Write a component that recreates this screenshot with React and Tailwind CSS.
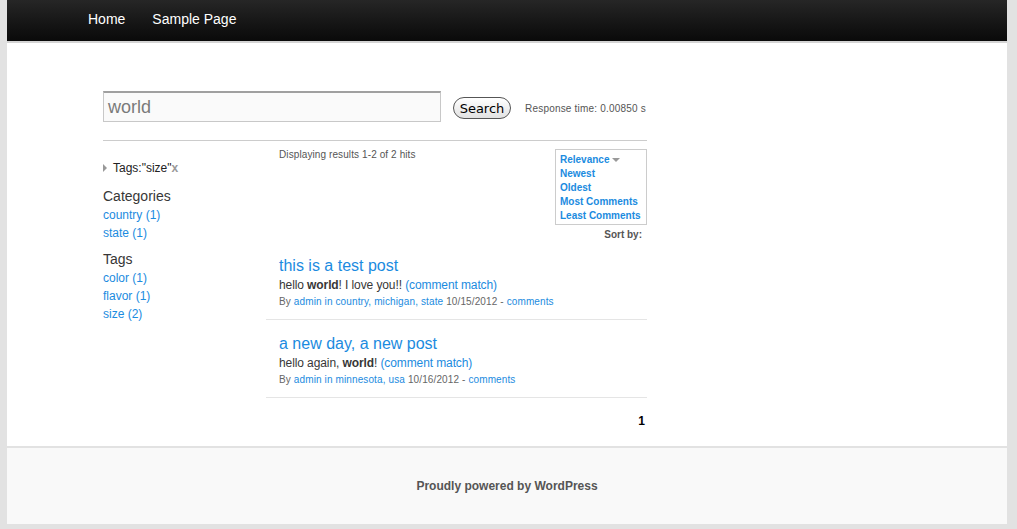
import React from "react";

const blue = "text-[#1b8be0]";

const Post = ({title, excerpt, meta}) => (
  <div className="pl-[13px] pt-[14px] pb-[9px] border-b border-[#e5e5e5]">
    <h2 className={`text-[16px] leading-[20px] ${blue}`}>{title}</h2>
    <p className="text-[12px] leading-[18px] text-[#373737] tracking-[-0.1px]">{excerpt}</p>
    <p className="text-[10px] leading-[15px] pb-[1px] text-[#666] tracking-[0.12px]">{meta}</p>
  </div>
);

const SideList = ({title, items}) => (
  <div className="mt-[7px]">
    <h3 className="text-[14px] leading-[20px] text-[#373737]">{title}</h3>
    {items.map(item => (
      <div key={item} className={`text-[12px] leading-[18px] ${blue}`}>
        {item}
      </div>
    ))}
  </div>
);

export default function App() {
  return (
    <div
      className="h-[529px] bg-[#e2e2e2] pl-[7px] pr-[10px] pb-[5px]"
      style={{fontFamily: '"Liberation Sans", Arial, sans-serif'}}
    >
      <div className="h-full w-[1000px] bg-white flex flex-col">
        {/* header */}
        <div className="h-[43px] shrink-0 border-b-2 border-[#d4d4d4] bg-gradient-to-b from-[#262626] to-[#0a0a0a] flex items-center pl-[81px] pb-[2px] gap-[27px]">
          <span className="text-white text-[14px]">Home</span>
          <span className="text-white text-[14px]">Sample Page</span>
        </div>

        {/* main */}
        <div className="flex-1 pl-[96px] pt-[48px]">
          <div className="w-[544px]">
            <div className="flex items-center">
              <div className="w-[338px] h-[31px] shrink-0 border border-[#c8c8c8] border-t-2 border-t-[#a0a0a0] bg-[#fafafa] flex items-center pl-[4px]">
                <span className="text-[18px] text-[#7a7a7a]">world</span>
              </div>
              <button
                className="ml-[12px] mt-[3px] w-[58px] h-[22px] shrink-0 rounded-full border border-[#555] bg-gradient-to-b from-white to-[#e2e2e2] text-[13px] text-black leading-none"
                style={{fontFamily: '"DejaVu Sans", sans-serif'}}
              >
                Search
              </button>
              <span className="ml-[14px] mt-[3px] whitespace-nowrap text-[10px] text-[#555] tracking-[0.2px]">
                Response time: 0.00850 s
              </span>
            </div>

            <div className="mt-[18px] border-t border-[#ccc]" />

            <div className="flex">
              {/* sidebar */}
              <div className="w-[163px] pt-[19px]">
                <div className="flex items-center text-[12px] leading-[16px] text-[#222]">
                  <span className="w-0 h-0 border-y-[4px] border-y-transparent border-l-[4px] border-l-[#999] mr-[6px]" />
                  <span>Tags:"size"</span>
                  <span className="font-bold text-[#999]">x</span>
                </div>
                <div className="pt-[3px]">
                  <SideList title="Categories" items={["country (1)", "state (1)"]} />
                  <SideList title="Tags" items={["color (1)", "flavor (1)", "size (2)"]} />
                </div>
              </div>

              {/* results */}
              <div className="w-[381px]">
                <div className="flex justify-between pt-[8px]">
                  <span className="pl-[13px] text-[10px] leading-[12px] text-[#555] tracking-[0.1px]">
                    Displaying results 1-2 of 2 hits
                  </span>
                  <div className="flex flex-col items-end">
                    <div className="w-[92px] border border-[#ccc] px-[4px] pt-[3px] pb-[1px]">
                      {["Relevance", "Newest", "Oldest", "Most Comments", "Least Comments"].map((s, i) => (
                        <div key={s} className={`flex items-center text-[10px] leading-[14px] font-bold ${blue}`}>
                          {s}
                          {i === 0 && (
                            <span className="ml-[3px] w-0 h-0 border-x-[4px] border-x-transparent border-t-[4px] border-t-[#999]" />
                          )}
                        </div>
                      ))}
                    </div>
                    <span className="mt-[3px] mr-[5px] text-[10px] leading-[14px] font-bold text-[#555]">Sort by:</span>
                  </div>
                </div>

                <Post
                  title="this is a test post"
                  excerpt={
                    <>
                      hello <b>world</b>! I love you!! <span className={blue}>(comment match)</span>
                    </>
                  }
                  meta={
                    <>
                      By <span className={blue}>admin</span> <span className={blue}>in country, michigan, state</span> 10/15/2012 - <span className={blue}>comments</span>
                    </>
                  }
                />
                <Post
                  title="a new day, a new post"
                  excerpt={
                    <>
                      hello again, <b>world</b>! <span className={blue}>(comment match)</span>
                    </>
                  }
                  meta={
                    <>
                      By <span className={blue}>admin</span> <span className={blue}>in minnesota, usa</span> 10/16/2012 - <span className={blue}>comments</span>
                    </>
                  }
                />
                <div className="flex justify-end pr-[2px] pt-[14px]">
                  <span className="text-[12px] font-bold text-black">1</span>
                </div>
              </div>
            </div>
          </div>
        </div>

        {/* footer */}
        <div className="h-[78px] shrink-0 border-t-2 border-[#e2e2e2] bg-[#f9f9f9] flex items-center justify-center">
          <span className="text-[12px] font-bold text-[#555]">Proudly powered by WordPress</span>
        </div>
      </div>
    </div>
  );
}
